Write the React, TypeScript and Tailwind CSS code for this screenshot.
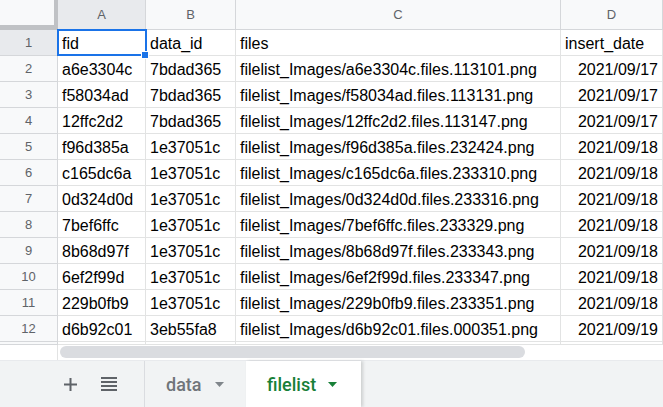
const rows: [string, string, string, string][] = [
  ['fid', 'data_id', 'files', 'insert_date'],
  ['a6e3304c', '7bdad365', 'filelist_Images/a6e3304c.files.113101.png', '2021/09/17'],
  ['f58034ad', '7bdad365', 'filelist_Images/f58034ad.files.113131.png', '2021/09/17'],
  ['12ffc2d2', '7bdad365', 'filelist_Images/12ffc2d2.files.113147.png', '2021/09/17'],
  ['f96d385a', '1e37051c', 'filelist_Images/f96d385a.files.232424.png', '2021/09/18'],
  ['c165dc6a', '1e37051c', 'filelist_Images/c165dc6a.files.233310.png', '2021/09/18'],
  ['0d324d0d', '1e37051c', 'filelist_Images/0d324d0d.files.233316.png', '2021/09/18'],
  ['7bef6ffc', '1e37051c', 'filelist_Images/7bef6ffc.files.233329.png', '2021/09/18'],
  ['8b68d97f', '1e37051c', 'filelist_Images/8b68d97f.files.233343.png', '2021/09/18'],
  ['6ef2f99d', '1e37051c', 'filelist_Images/6ef2f99d.files.233347.png', '2021/09/18'],
  ['229b0fb9', '1e37051c', 'filelist_Images/229b0fb9.files.233351.png', '2021/09/18'],
  ['d6b92c01', '3eb55fa8', 'filelist_Images/d6b92c01.files.000351.png', '2021/09/19'],
]

const colWidths = ['w-[88px]', 'w-[90px]', 'w-[325px]', 'w-[102px]']
const letters = ['A', 'B', 'C', 'D']

function Caret({ color }: { color: string }) {
  return (
    <svg width="9" height="5" viewBox="0 0 9 5" aria-hidden>
      <path d="M0 0h9L4.5 5z" fill={color} />
    </svg>
  )
}

export default function App() {
  return (
    <div className="w-[663px] h-[407px] overflow-hidden bg-white flex flex-col font-['Liberation_Sans',Arial,sans-serif]">
      {/* grid */}
      <div className="relative flex flex-col">
        <div className="flex h-[30px]">
          <div className="w-[58px] shrink-0 bg-[#f8f9fa] border-r-[4px] border-b-[5px] border-[#c0c2c5]" />
          {letters.map((l, i) => (
            <div
              key={l}
              className={`${colWidths[i]} shrink-0 flex items-center justify-center border-r border-b border-[#d5d7da] text-[13px] text-[#5f6368] ${i === 0 ? 'bg-[#e8eaed]' : 'bg-[#f8f9fa]'}`}
            >
              {l}
            </div>
          ))}
        </div>

        {rows.map((r, ri) => (
          <div key={ri} className="flex h-[26px]">
            <div
              className={`w-[58px] shrink-0 flex items-center justify-center border-r border-b border-[#d5d7da] text-[13px] text-[#5f6368] ${ri === 0 ? 'bg-[#e8eaed]' : 'bg-[#f8f9fa]'}`}
            >
              {ri + 1}
            </div>
            {r.map((v, ci) => (
              <div
                key={ci}
                className={`${colWidths[ci]} shrink-0 overflow-hidden whitespace-nowrap border-r border-b border-[#e2e3e3] px-[4px] pt-[3px] leading-[22px] text-[16px] text-black ${ci === 3 && ri > 0 ? 'text-right' : ''}`}
              >
                {v}
              </div>
            ))}
          </div>
        ))}

        {/* peek of row 13 */}
        <div className="flex h-[3px]">
          <div className="w-[58px] shrink-0 bg-[#f8f9fa] border-r border-b border-[#d5d7da]" />
          {colWidths.map((w, i) => (
            <div key={i} className={`${w} shrink-0 border-r border-b border-[#e2e3e3]`} />
          ))}
        </div>

        {/* selection A1 */}
        <div className="absolute left-[57px] top-[29px] w-[90px] h-[27px] border-2 border-[#1a73e8] pointer-events-none" />
        <div className="absolute left-[141px] top-[51px] w-[8px] h-[8px] bg-[#1a73e8] border border-white" />
      </div>

      {/* scroll strip */}
      <div className="flex h-[15px]">
        <div className="w-[58px] shrink-0 border-r border-[#e2e3e3] bg-white" />
        <div className="flex-1 flex items-start pl-[2px] pt-[1px]">
          <div className="w-[465px] h-[12px] rounded-full bg-[#dadce0]" />
        </div>
      </div>

      {/* sheet tabs */}
      <div className="flex-1 flex items-stretch bg-[#f1f3f4] border-t border-[#e8eaed]">
        <div className="w-[145px] shrink-0 flex items-center pl-[64px] gap-[24px] border-r border-[#dadce0]">
          <svg width="13" height="13" viewBox="0 0 13 13" aria-hidden>
            <path d="M6.5 0v13M0 6.5h13" stroke="#5f6368" strokeWidth="2" />
          </svg>
          <svg width="16" height="14" viewBox="0 0 16 14" aria-hidden>
            <path d="M0 1h16M0 5h16M0 9h16M0 13h16" stroke="#5f6368" strokeWidth="2" />
          </svg>
        </div>
        <div className="w-[101px] shrink-0 flex items-center pl-[21px] gap-[13px] font-['Roboto',sans-serif] font-medium text-[18px] text-[#70757a]">
          <span>data</span>
          <Caret color="#80868b" />
        </div>
        <div className="w-[115px] shrink-0 flex items-center pl-[21px] gap-[12px] bg-white shadow-[2px_0_3px_rgba(60,64,67,0.2)] font-['Roboto',sans-serif] font-medium text-[18px] text-[#188038]">
          <span>filelist</span>
          <Caret color="#188038" />
        </div>
      </div>
    </div>
  )
}
